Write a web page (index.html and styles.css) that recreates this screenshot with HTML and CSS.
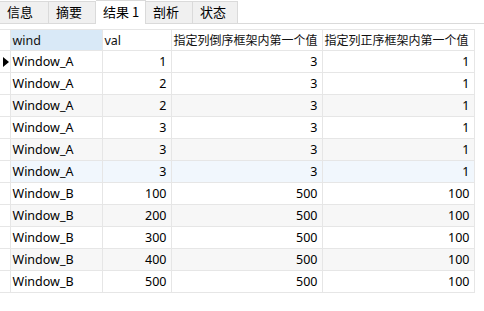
FILE: index.html
```html
<!DOCTYPE html>
<html>
<head>
<meta charset="utf-8">
<link rel="stylesheet" href="styles.css">
</head>
<body>
<div class="tabs">
  <div class="tab t1">信息</div>
  <div class="tab t2">摘要</div>
  <div class="tab t3 active">结果 1</div>
  <div class="tab t4">剖析</div>
  <div class="tab t5">状态</div>
</div>
<div class="gridwrap">
<table class="grid">
  <colgroup>
    <col class="c0"><col class="c1"><col class="c2"><col class="c3"><col class="c4">
  </colgroup>
  <thead>
    <tr><th class="ind"></th><th class="sel lat">wind</th><th class="lat">val</th><th>指定列倒序框架内第一个值</th><th>指定列正序框架内第一个值</th></tr>
  </thead>
  <tbody>
    <tr><td class="ind"><span class="arrow"></span></td><td>Window_A</td><td class="n">1</td><td class="n">3</td><td class="n">1</td></tr>
    <tr><td class="ind"></td><td>Window_A</td><td class="n">2</td><td class="n">3</td><td class="n">1</td></tr>
    <tr class="alt"><td class="ind"></td><td>Window_A</td><td class="n">2</td><td class="n">3</td><td class="n">1</td></tr>
    <tr><td class="ind"></td><td>Window_A</td><td class="n">3</td><td class="n">3</td><td class="n">1</td></tr>
    <tr class="alt"><td class="ind"></td><td>Window_A</td><td class="n">3</td><td class="n">3</td><td class="n">1</td></tr>
    <tr class="hover"><td class="ind"></td><td>Window_A</td><td class="n">3</td><td class="n">3</td><td class="n">1</td></tr>
    <tr><td class="ind"></td><td>Window_B</td><td class="n">100</td><td class="n">500</td><td class="n">100</td></tr>
    <tr class="alt"><td class="ind"></td><td>Window_B</td><td class="n">200</td><td class="n">500</td><td class="n">100</td></tr>
    <tr><td class="ind"></td><td>Window_B</td><td class="n">300</td><td class="n">500</td><td class="n">100</td></tr>
    <tr class="alt"><td class="ind"></td><td>Window_B</td><td class="n">400</td><td class="n">500</td><td class="n">100</td></tr>
    <tr><td class="ind"></td><td>Window_B</td><td class="n">500</td><td class="n">500</td><td class="n">100</td></tr>
  </tbody>
</table>
</div>
</body>
</html>
```
FILE: styles.css
```css
html, body {
  margin: 0;
  padding: 0;
  background: #ffffff;
}
body {
  font-family: "Segoe UI", "Noto Sans", "Noto Sans CJK SC", sans-serif;
  color: #000;
  width: 484px;
  height: 311px;
  overflow: hidden;
}
.tabs {
  display: flex;
  height: 23px;
  border-bottom: 1px solid #dadada;
  box-sizing: content-box;
}
.tab {
  box-sizing: border-box;
  margin-top: 1px;
  height: 22px;
  background: #f0f0f0;
  border: 1px solid #dadada;
  border-bottom: none;
  border-left: none;
  font-size: 13px;
  line-height: 20px;
  padding-left: 7px;
  font-family: "Noto Sans CJK SC", sans-serif;
}
.t1 { width: 49px; }
.t2 { width: 47px; }
.t3 { width: 50px; }
.t4 { width: 47px; }
.t5 { width: 45px; }
.tab.active {
  background: #ffffff;
  margin-top: 0;
  height: 24px;
  margin-bottom: -1px;
  line-height: 22px;
}
.gridwrap {
  padding-top: 5px;
}
.grid {
  border-collapse: collapse;
  table-layout: fixed;
  width: 474px;
  font-size: 12px;
}
.c0 { width: 10px; }
.c1 { width: 92px; }
.c2 { width: 69px; }
.c3 { width: 151px; }
.c4 { width: 152px; }
.grid th, .grid td {
  border: 1px solid #e6e6e6;
  height: 21px;
  padding: 0 3px 0 2px;
  white-space: nowrap;
  overflow: hidden;
  font-weight: normal;
  text-align: left;
  vertical-align: middle;
  box-sizing: border-box;
}
.grid td { font-size: 12.5px; height: 22px; }
.grid th {
  height: 21px;
  padding-left: 2px;
  color: #111;
}
.grid th.lat { font-size: 12.5px; }
.grid th.sel {
  background: #d9e9f7;
}
.grid th.ind, .grid td.ind {
  padding: 0;
  border-left: none;
}
.grid td.n { text-align: right; padding-right: 4px; }
.grid tr.alt td { background: #f7f7f7; }
.grid tr.hover td { background: #f1f7fd; }
.grid td.ind { background: #ffffff !important; }
.arrow {
  display: block;
  width: 0;
  height: 0;
  margin-left: 3px;
  border-top: 5px solid transparent;
  border-bottom: 5px solid transparent;
  border-left: 6px solid #000;
}
```
